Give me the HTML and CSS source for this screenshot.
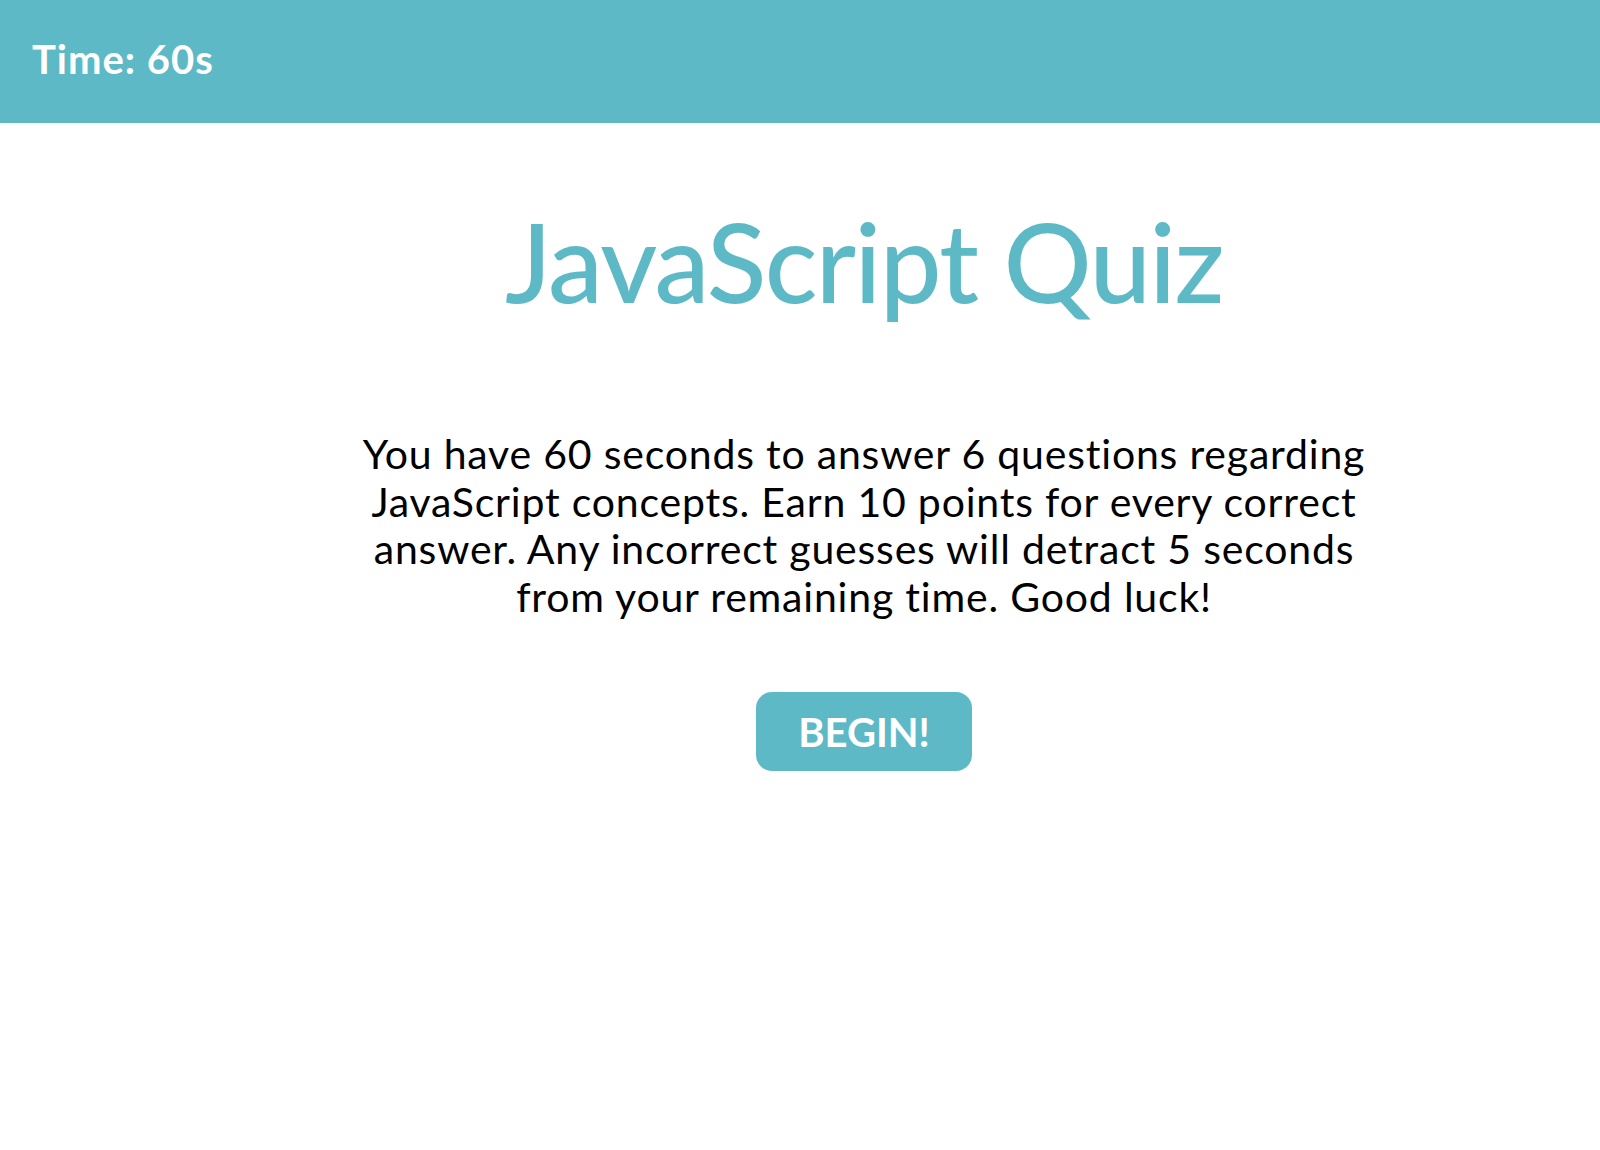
FILE: index.html
```html
<!DOCTYPE html>
<html lang="en">
<head>
<meta charset="utf-8">
<title>JavaScript Quiz</title>
<link rel="stylesheet" href="styles.css">
</head>
<body>
<header class="topbar">
  <div class="timer">Time: 60s</div>
</header>
<main class="intro">
  <h1 class="title">JavaScript Quiz</h1>
  <p class="rules">You have 60 seconds to answer 6 questions regarding JavaScript concepts. Earn 10 points for every correct answer. Any incorrect guesses will detract 5 seconds from your remaining time. Good luck!</p>
  <button class="begin" type="button">BEGIN!</button>
</main>
</body>
</html>
```
FILE: styles.css
```css
html, body {
  margin: 0;
  padding: 0;
  background: #ffffff;
}
body {
  font-family: Lato, "Open Sans", "Liberation Sans", sans-serif;
  color: #000000;
}
.topbar {
  height: 123px;
  background: #5db9c6;
  display: flex;
  align-items: center;
  padding: 0 0 6px 32px;
  box-sizing: border-box;
}
.timer {
  color: #ffffff;
  font-weight: 700;
  font-size: 40px;
  letter-spacing: 1px;
  line-height: 1.2;
}
.intro {
  margin-left: 128px;
  display: flex;
  flex-direction: column;
  align-items: center;
  text-align: center;
}
.title {
  margin: 71px 0 0;
  font-size: 110px;
  letter-spacing: -1.6px;
  line-height: 1.2;
  font-weight: 500;
  color: #5db9c6;
}
.rules {
  width: 1010px;
  margin: 104px 0 0;
  font-size: 41px;
  letter-spacing: 0.8px;
  line-height: 47.6px;
  font-weight: 400;
}
.begin {
  margin-top: 72px;
  height: 79px;
  padding: 0 42px;
  border: none;
  border-radius: 16px;
  background: #5db9c6;
  color: #ffffff;
  font-family: inherit;
  font-size: 40px;
  font-weight: 700;
}
```
